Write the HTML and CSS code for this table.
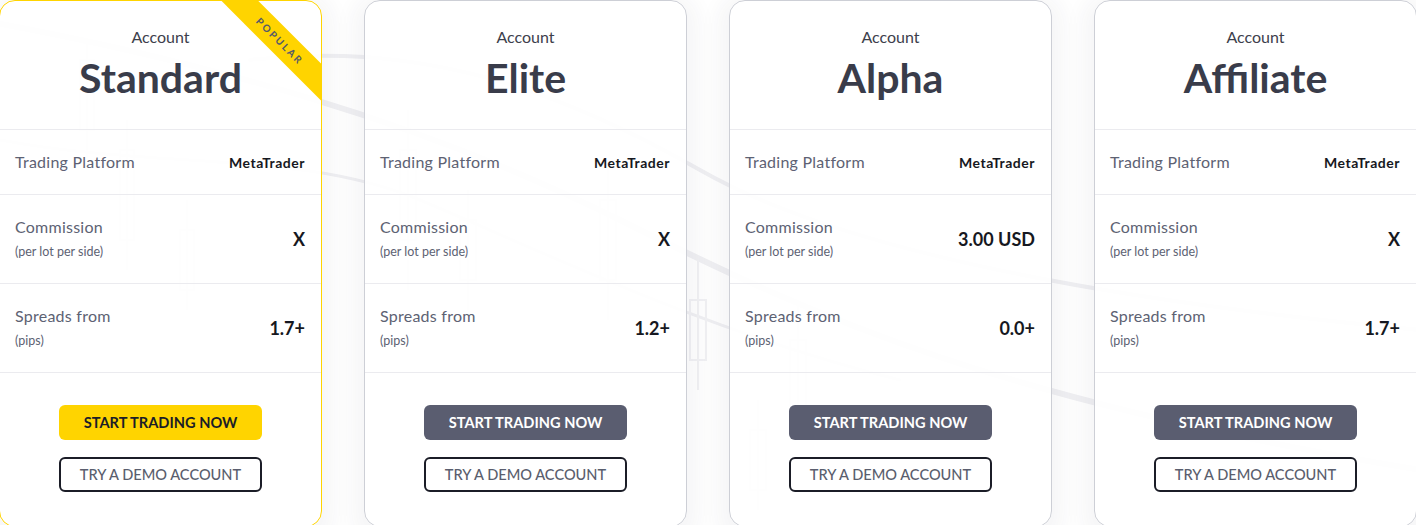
FILE: index.html
```html
<!DOCTYPE html>
<html lang="en">
<head>
<meta charset="utf-8">
<title>Accounts</title>
<link rel="stylesheet" href="styles.css">
</head>
<body>
<div class="page">
  <svg class="bg-chart" width="1416" height="525" viewBox="0 0 1416 525" aria-hidden="true">
    <g fill="none" stroke="#f0f0f3" stroke-width="6" stroke-linecap="round">
      <path d="M-20 20 C 200 60, 420 120, 620 220 S 1000 400, 1420 470"/>
      <path d="M250 60 C 420 40, 560 90, 700 170 S 1100 300, 1420 330" stroke-width="4"/>
      <path d="M0 140 C 160 170, 300 150, 420 200 S 700 330, 900 380" stroke-width="3"/>
    </g>
    <g fill="none" stroke="#f1f1f4" stroke-width="2">
      <rect x="80" y="60" width="14" height="70"/><line x1="87" y1="40" x2="87" y2="160"/>
      <rect x="120" y="150" width="14" height="90"/><line x1="127" y1="120" x2="127" y2="270"/>
      <rect x="180" y="230" width="14" height="60"/><line x1="187" y1="200" x2="187" y2="310"/>
      <rect x="400" y="150" width="16" height="90"/><line x1="408" y1="110" x2="408" y2="290"/>
      <rect x="460" y="220" width="16" height="60"/><line x1="468" y1="190" x2="468" y2="310"/>
      <rect x="600" y="200" width="16" height="80"/><line x1="608" y1="160" x2="608" y2="320"/>
      <rect x="690" y="300" width="16" height="60"/><line x1="698" y1="260" x2="698" y2="390"/>
      <rect x="790" y="340" width="16" height="70"/><line x1="798" y1="300" x2="798" y2="440"/>
      <rect x="750" y="430" width="16" height="60"/><line x1="758" y1="400" x2="758" y2="510"/>
    </g>
  </svg>
  <div class="cards">
    <div class="card card-popular">
      <div class="ribbon">POPULAR</div>
      <div class="card-head">
        <div class="head-sub">Account</div>
        <div class="head-title">Standard</div>
      </div>
      <div class="row row-short">
        <div class="label">Trading Platform</div>
        <div class="value value-small">MetaTrader</div>
      </div>
      <div class="row">
        <div class="label-group"><div class="label">Commission</div><div class="sub">(per lot per side)</div></div>
        <div class="value">X</div>
      </div>
      <div class="row">
        <div class="label-group"><div class="label">Spreads from</div><div class="sub">(pips)</div></div>
        <div class="value">1.7+</div>
      </div>
      <div class="actions">
        <a class="btn btn-yellow">START TRADING NOW</a>
        <a class="btn btn-outline">TRY A DEMO ACCOUNT</a>
      </div>
    </div>

    <div class="card">
      <div class="card-head">
        <div class="head-sub">Account</div>
        <div class="head-title">Elite</div>
      </div>
      <div class="row row-short">
        <div class="label">Trading Platform</div>
        <div class="value value-small">MetaTrader</div>
      </div>
      <div class="row">
        <div class="label-group"><div class="label">Commission</div><div class="sub">(per lot per side)</div></div>
        <div class="value">X</div>
      </div>
      <div class="row">
        <div class="label-group"><div class="label">Spreads from</div><div class="sub">(pips)</div></div>
        <div class="value">1.2+</div>
      </div>
      <div class="actions">
        <a class="btn btn-dark">START TRADING NOW</a>
        <a class="btn btn-outline">TRY A DEMO ACCOUNT</a>
      </div>
    </div>

    <div class="card">
      <div class="card-head">
        <div class="head-sub">Account</div>
        <div class="head-title">Alpha</div>
      </div>
      <div class="row row-short">
        <div class="label">Trading Platform</div>
        <div class="value value-small">MetaTrader</div>
      </div>
      <div class="row">
        <div class="label-group"><div class="label">Commission</div><div class="sub">(per lot per side)</div></div>
        <div class="value">3.00 USD</div>
      </div>
      <div class="row">
        <div class="label-group"><div class="label">Spreads from</div><div class="sub">(pips)</div></div>
        <div class="value">0.0+</div>
      </div>
      <div class="actions">
        <a class="btn btn-dark">START TRADING NOW</a>
        <a class="btn btn-outline">TRY A DEMO ACCOUNT</a>
      </div>
    </div>

    <div class="card">
      <div class="card-head">
        <div class="head-sub">Account</div>
        <div class="head-title">Affiliate</div>
      </div>
      <div class="row row-short">
        <div class="label">Trading Platform</div>
        <div class="value value-small">MetaTrader</div>
      </div>
      <div class="row">
        <div class="label-group"><div class="label">Commission</div><div class="sub">(per lot per side)</div></div>
        <div class="value">X</div>
      </div>
      <div class="row">
        <div class="label-group"><div class="label">Spreads from</div><div class="sub">(pips)</div></div>
        <div class="value">1.7+</div>
      </div>
      <div class="actions">
        <a class="btn btn-dark">START TRADING NOW</a>
        <a class="btn btn-outline">TRY A DEMO ACCOUNT</a>
      </div>
    </div>
  </div>
</div>
</body>
</html>
```

FILE: styles.css
```css
* { box-sizing: border-box; }
html, body {
  margin: 0;
  padding: 0;
  background: #ffffff;
  overflow: hidden;
}
body {
  font-family: Lato, "Open Sans", "Liberation Sans", sans-serif;
  color: #3a3d4b;
}
.page {
  position: relative;
  width: 1416px;
  height: 525px;
  overflow: hidden;
}
.bg-chart {
  position: absolute;
  left: 0;
  top: 0;
}
.cards {
  position: relative;
  display: flex;
  gap: 42px;
  margin-left: -1px;
}
.card {
  position: relative;
  flex: 0 0 323px;
  width: 323px;
  height: 527px;
  background: rgba(255, 255, 255, 0.88);
  border: 1px solid #cdcfd6;
  border-radius: 16px;
  overflow: hidden;
  box-shadow: 0 6px 20px 12px rgba(40, 45, 75, 0.045);
}
.card-popular {
  border-color: #ffd400;
}
.ribbon {
  position: absolute;
  top: 27px;
  left: calc(100% - 122px);
  width: 162px;
  height: 26px;
  background: #ffd400;
  color: #555a6a;
  font-size: 10px;
  font-weight: 700;
  letter-spacing: 2.2px;
  line-height: 26px;
  text-align: center;
  transform: rotate(45deg);
}
.card-head {
  padding: 27px 0 26px;
  text-align: center;
  border-bottom: 1px solid #ebebef;
}
.head-sub {
  font-size: 16px;
  line-height: 18px;
  color: #3d404c;
}
.head-title {
  margin-top: 7px;
  font-size: 41px;
  line-height: 50px;
  font-weight: 700;
  color: #393c4a;
}
.row {
  height: 89px;
  display: flex;
  align-items: center;
  justify-content: space-between;
  padding: 0 16px 0 15px;
  border-bottom: 1px solid #ebebef;
}
.row-short {
  height: 65px;
}
.label {
  font-size: 16px;
  line-height: 18px;
  letter-spacing: 0.25px;
  color: #5d6273;
}
.label-group .sub {
  margin-top: 8px;
  font-size: 12.5px;
  line-height: 16px;
  color: #5d6273;
}
.value {
  font-size: 18px;
  font-weight: 700;
  color: #161821;
}
.value-small {
  font-size: 14px;
  letter-spacing: 0.5px;
}
.actions {
  display: flex;
  flex-direction: column;
  align-items: center;
  gap: 17px;
  padding-top: 32px;
}
.btn {
  display: flex;
  align-items: center;
  justify-content: center;
  width: 203px;
  height: 35px;
  border-radius: 6px;
  font-size: 14.6px;
  text-decoration: none;
}
.btn-yellow {
  background: #ffd400;
  color: #1b1d27;
  font-weight: 700;
}
.btn-dark {
  background: #5a5d70;
  color: #ffffff;
  font-weight: 700;
}
.btn-outline {
  background: #ffffff;
  border: 2px solid #1b1d27;
  color: #5a5e6e;
  font-weight: 500;
}
```
